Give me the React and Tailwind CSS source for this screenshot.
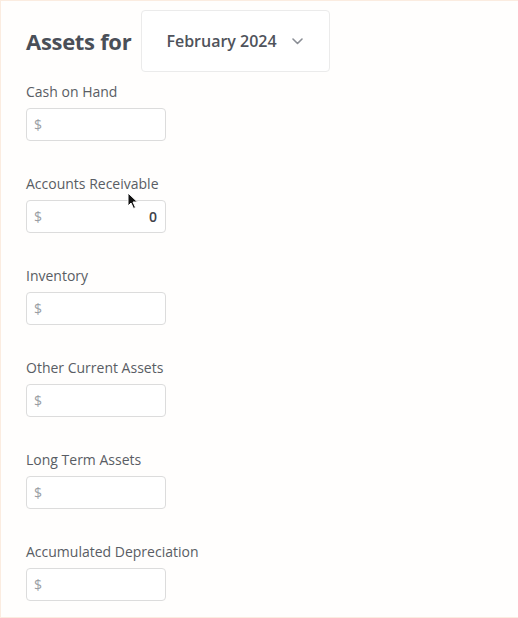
import React from "react";

const fields = [
  { label: "Cash on Hand", value: "" },
  { label: "Accounts Receivable", value: "0" },
  { label: "Inventory", value: "" },
  { label: "Other Current Assets", value: "" },
  { label: "Long Term Assets", value: "" },
  { label: "Accumulated Depreciation", value: "" },
];

function Cursor() {
  return (
    <svg className="absolute left-[126px] top-[191px]" width="12" height="18" viewBox="0 0 12 18">
      <path d="M1 1 L1 14 L4 11 L6.5 16.5 L8.5 15.5 L6 10 L10.5 10 Z" fill="#111" stroke="#fff" strokeWidth="1" />
    </svg>
  );
}

export default function App() {
  return (
    <div className="relative h-[618px] w-[518px] overflow-hidden bg-[#fffefd] border-l border-t border-b border-[#fbece0] font-['Open_Sans',sans-serif] text-[#50545c]">
      <div className="flex items-center pl-[25px] pt-[9px]">
        <h1 className="text-[22px] font-bold text-[#4a4f58] tracking-[-0.3px]">Assets for</h1>
        <div className="ml-[10px] flex h-[62px] w-[189px] items-center rounded-[4px] border border-[#ebebeb] bg-white pl-[24px]">
          <span className="text-[16px] font-semibold text-[#4f535b]">February 2024</span>
          <svg className="ml-[15px]" width="11" height="7" viewBox="0 0 11 7">
            <path d="M1 1 L5.5 5.5 L10 1" fill="none" stroke="#8a8e95" strokeWidth="1.6" strokeLinecap="round" strokeLinejoin="round" />
          </svg>
        </div>
      </div>
      <div className="flex flex-col gap-[33px] pl-[25px] pt-[10px]">
        {fields.map((f) => (
          <div key={f.label} className="flex flex-col">
            <label className="text-[14px] leading-[20px] text-[#595d64]">{f.label}</label>
            <div className="mt-[6px] flex h-[33px] w-[140px] items-center justify-between rounded-[4px] border border-[#dcdcdc] bg-white pl-[7px] pr-[8px]">
              <span className="text-[14px] text-[#9a9ea4]">$</span>
              <span className="text-[14px] font-semibold text-[#3e4249]">{f.value}</span>
            </div>
          </div>
        ))}
      </div>
      <Cursor />
    </div>
  );
}
